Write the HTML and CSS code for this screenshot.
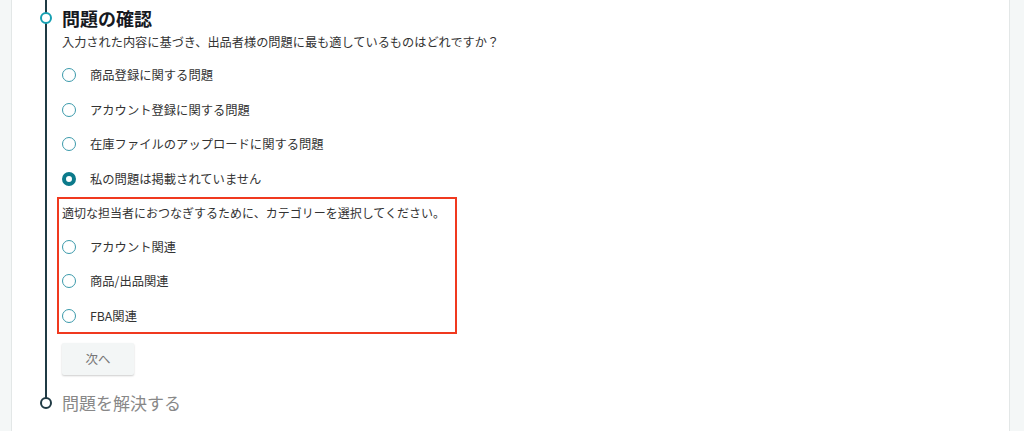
FILE: index.html
```html
<!DOCTYPE html>
<html lang="ja">
<head>
    <meta charset="UTF-8">
    <meta name="viewport" content="width=device-width, initial-scale=1.0">
    <title>問題の確認</title>
    <link rel="stylesheet" href="styles.css">
</head>
<body>
    <div class="page">
        <div class="side side-left"></div>
        <div class="main">
            <div class="steps">
                <div class="step">
                    <span class="marker marker-active"></span>
                    <h2>問題の確認</h2>
                    <p class="lead">入力された内容に基づき、出品者様の問題に最も適しているものはどれですか？</p>
                    <div class="options">
                        <label class="option"><input type="radio" name="issue"> 商品登録に関する問題</label>
                        <label class="option"><input type="radio" name="issue"> アカウント登録に関する問題</label>
                        <label class="option"><input type="radio" name="issue"> 在庫ファイルのアップロードに関する問題</label>
                        <label class="option"><input type="radio" name="issue" checked> 私の問題は掲載されていません</label>
                    </div>
                    <div class="category-box">
                        <p class="box-text">適切な担当者におつなぎするために、カテゴリーを選択してください。</p>
                        <div class="options">
                            <label class="option"><input type="radio" name="category"> アカウント関連</label>
                            <label class="option"><input type="radio" name="category"> 商品/出品関連</label>
                            <label class="option"><input type="radio" name="category"> FBA関連</label>
                        </div>
                    </div>
                    <button class="next-btn">次へ</button>
                </div>
                <div class="step step-next">
                    <span class="marker marker-dark"></span>
                    <h3>問題を解決する</h3>
                </div>
            </div>
        </div>
        <div class="side side-right"></div>
    </div>
</body>
</html>
```

FILE: styles.css
```css
* {
    margin: 0;
    padding: 0;
    box-sizing: border-box;
    font-family: "Noto Sans CJK JP", "Noto Sans", sans-serif;
}

body {
    background: #ffffff;
}

.page {
    display: flex;
    height: 431px;
    overflow: hidden;
}

.side {
    background: #f4f7f7;
}

.side-left {
    width: 12px;
    border-right: 1px solid #e3e7e7;
}

.side-right {
    width: 15px;
    border-left: 1px solid #e3e7e7;
}

.main {
    flex: 1;
    background: #ffffff;
}

.steps {
    position: relative;
}

/* timeline line */
.steps::before {
    content: "";
    position: absolute;
    left: 33px;
    top: 0;
    height: 398px;
    width: 2px;
    background: #1f3a44;
}

.step {
    position: relative;
    padding-left: 50px;
}

.marker {
    position: absolute;
    left: 28px;
    width: 12px;
    height: 12px;
    border-radius: 50%;
    background: #fff;
}

.marker-active {
    top: 12px;
    border: 2px solid #16a0b2;
}

.marker-dark {
    top: 6px;
    border: 2px solid #1f3a44;
}

h2 {
    padding-top: 6px;
    font-size: 18px;
    line-height: 24px;
    font-weight: 700;
    color: #16191f;
}

.lead {
    margin-top: 2px;
    font-size: 12.2px;
    line-height: 20px;
    color: #333;
    white-space: nowrap;
}

.options {
    display: flex;
    flex-direction: column;
    gap: 14.5px;
}

.step > .options {
    margin-top: 13px;
}

.option {
    display: flex;
    align-items: center;
    gap: 14px;
    height: 20px;
    font-size: 12.3px;
    color: #333;
}

.option input {
    appearance: none;
    width: 14px;
    height: 14px;
    border: 1.5px solid #3b9aab;
    border-radius: 50%;
    background: #fff;
    margin: 0;
}

.option input:checked {
    border: 4.5px solid #0c7a8b;
}

.category-box {
    width: 400px;
    margin-top: 8px;
    margin-left: -5px;
    padding: 4px 0 6px 3px;
    border: 2px solid #f0391f;
}

.box-text {
    font-size: 12px;
    line-height: 20px;
    color: #333;
    margin-bottom: 14px;
    white-space: nowrap;
}

.next-btn {
    margin-top: 9px;
    width: 72px;
    height: 32px;
    border: none;
    border-radius: 2px;
    background: #f3f6f6;
    box-shadow: 0 1px 2px rgba(0, 0, 0, 0.2);
    color: #777;
    font-size: 12.5px;
}

.step-next {
    margin-top: 16px;
}

h3 {
    font-size: 17px;
    line-height: 24px;
    font-weight: 400;
    color: #888;
}
```
